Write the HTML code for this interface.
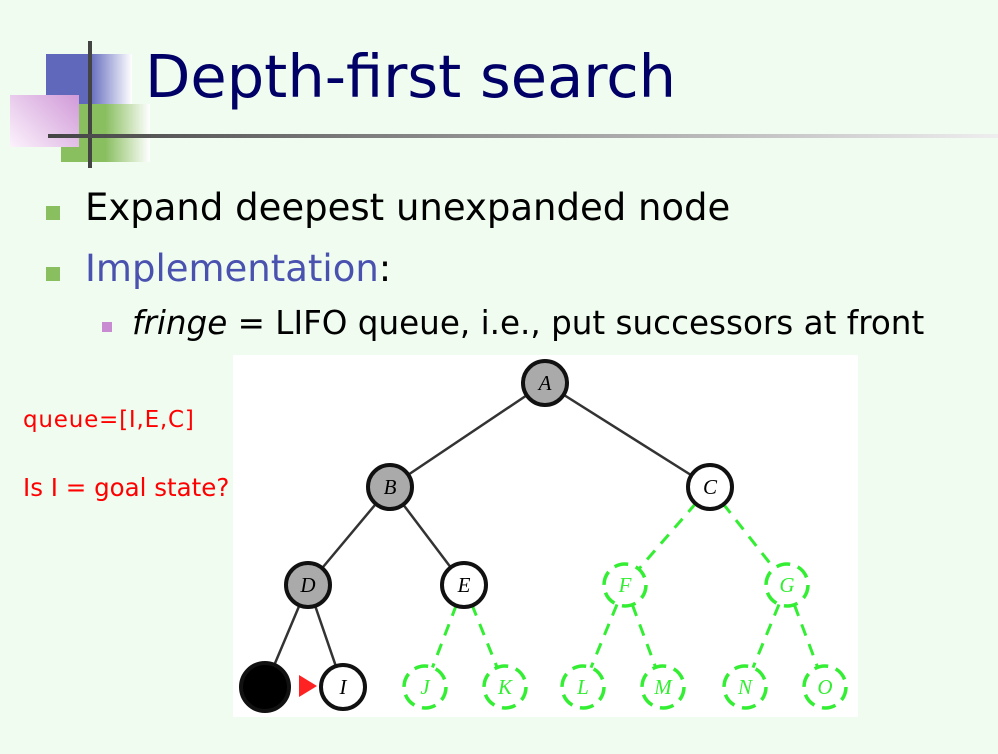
<!DOCTYPE html>
<html><head><style>
body{margin:0;width:998px;height:754px;background:#f0fcf0;position:relative;overflow:hidden;font-family:"DejaVu Sans","Liberation Sans",sans-serif}
.a{position:absolute;line-height:1;white-space:nowrap}
</style></head><body>
<div class="a" style="left:46px;top:54px;width:86px;height:51px;background:linear-gradient(90deg,#6068bc 0,#6068bc 50%,#fff 100%)"></div>
<div class="a" style="left:61px;top:104px;width:89px;height:58px;background:linear-gradient(90deg,#8abf60 0,#8abf60 50%,#fff 100%)"></div>
<div class="a" style="left:10px;top:95px;width:69px;height:52px;background:linear-gradient(225deg,#d09ad8,#fcf2fc)"></div>
<div class="a" style="left:88px;top:41px;width:4px;height:127px;background:#444"></div>
<div class="a" style="left:48px;top:134px;width:950px;height:4px;background:linear-gradient(90deg,#444,#888 40%,#ccc 80%,#eee)"></div>
<div class="a" style="left:145px;top:47px;font-size:59px;color:#000066">Depth-first search</div>
<div class="a" style="left:46px;top:206px;width:14px;height:14px;background:#8abf60"></div>
<div class="a" style="left:85px;top:189px;font-size:37px;color:#000">Expand deepest unexpanded node</div>
<div class="a" style="left:46px;top:267px;width:14px;height:14px;background:#8abf60"></div>
<div class="a" style="left:85px;top:250px;font-size:37px;color:#000"><span style="color:#4a52b0">Implementation</span>:</div>
<div class="a" style="left:102px;top:322px;width:10px;height:10px;background:#c88ad0"></div>
<div class="a" style="left:132px;top:307px;font-size:32.6px;color:#000"><i>fringe</i> = LIFO queue, i.e., put successors at front</div>
<div class="a" style="left:23px;top:409px;font-size:23px;color:#f00;letter-spacing:0.8px">queue=[I,E,C]</div>
<div class="a" style="left:23px;top:476px;font-size:24.5px;color:#f00">Is I = goal state?</div>
<svg class="a" style="left:233px;top:355px" width="625" height="362" viewBox="233 355 625 362">
<rect x="233" y="355" width="625" height="362" fill="#fff"/>
<g stroke="#333" stroke-width="2.5">
<line x1="545" y1="383" x2="390" y2="487"/><line x1="545" y1="383" x2="710" y2="487"/>
<line x1="390" y1="487" x2="308" y2="585"/><line x1="390" y1="487" x2="464" y2="585"/>
<line x1="308" y1="585" x2="265" y2="687"/><line x1="308" y1="585" x2="343" y2="687"/>
</g>
<g stroke="#3e3" stroke-width="3" stroke-dasharray="12 9">
<line x1="710" y1="487" x2="625" y2="585"/><line x1="710" y1="487" x2="787" y2="585"/>
<line x1="464" y1="585" x2="425" y2="687"/><line x1="464" y1="585" x2="505" y2="687"/>
<line x1="625" y1="585" x2="583" y2="687"/><line x1="625" y1="585" x2="663" y2="687"/>
<line x1="787" y1="585" x2="745" y2="687"/><line x1="787" y1="585" x2="825" y2="687"/>
</g>
<g stroke="#111" stroke-width="4">
<circle cx="545" cy="383" r="22" fill="#aaa"/><circle cx="390" cy="487" r="22" fill="#aaa"/>
<circle cx="308" cy="585" r="22" fill="#aaa"/><circle cx="710" cy="487" r="22" fill="#fff"/>
<circle cx="464" cy="585" r="22" fill="#fff"/><circle cx="343" cy="687" r="22" fill="#fff"/>
<circle cx="265" cy="687" r="24" fill="#000"/>
</g>
<g stroke="#3e3" stroke-width="3.5" stroke-dasharray="14 8" fill="#fff">
<circle cx="625" cy="585" r="21"/><circle cx="787" cy="585" r="21"/>
<circle cx="425" cy="687" r="21"/><circle cx="505" cy="687" r="21"/><circle cx="583" cy="687" r="21"/>
<circle cx="663" cy="687" r="21"/><circle cx="745" cy="687" r="21"/><circle cx="825" cy="687" r="21"/>
</g>
<polygon points="299,675 317,686 299,697" fill="#f22"/>
<g font-family="Liberation Serif,serif" font-style="italic" font-size="21" text-anchor="middle">
<text x="545" y="390">A</text><text x="390" y="494">B</text><text x="710" y="494">C</text>
<text x="308" y="592">D</text><text x="464" y="592">E</text><text x="343" y="694">I</text>
<g fill="#3e3"><text x="625" y="592">F</text><text x="787" y="592">G</text><text x="425" y="694">J</text>
<text x="505" y="694">K</text><text x="583" y="694">L</text><text x="663" y="694">M</text>
<text x="745" y="694">N</text><text x="825" y="694">O</text></g>
</g>
</svg>
</body></html>
